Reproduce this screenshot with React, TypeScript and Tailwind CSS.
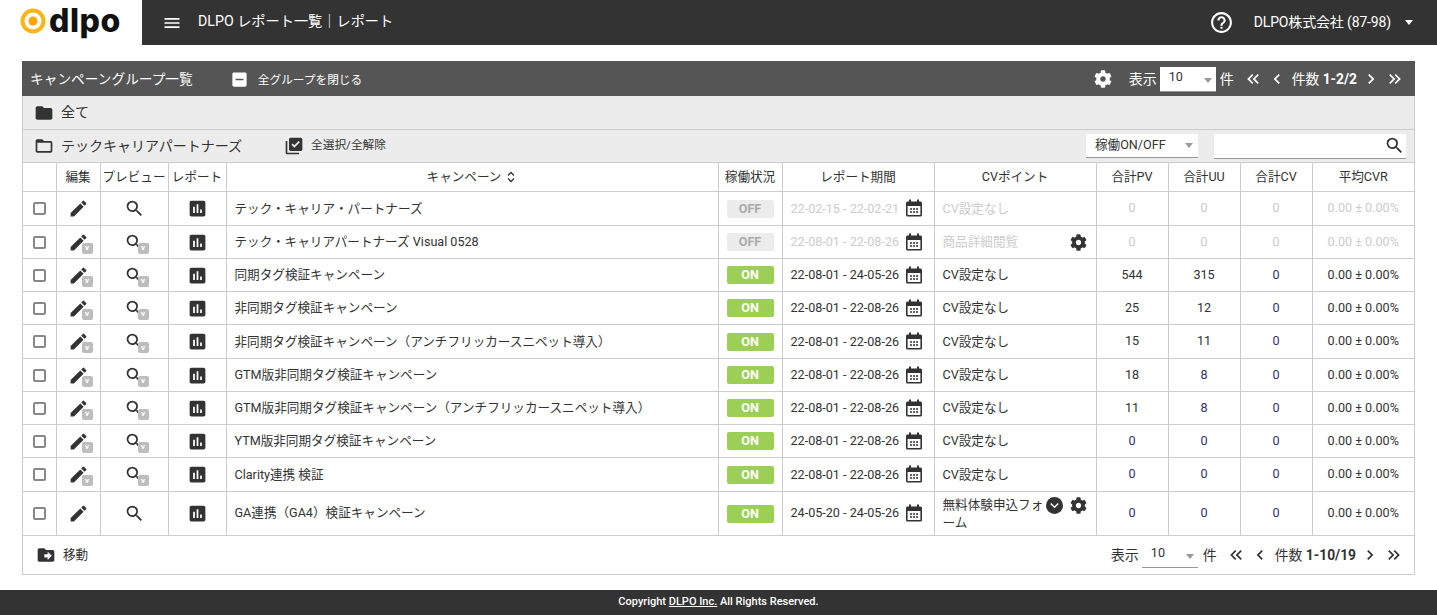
import { FaCog } from "react-icons/fa";
import {
  MdAssessment,
  MdChevronLeft,
  MdChevronRight,
  MdDriveFileMove,
  MdEdit,
  MdExpandMore,
  MdFolder,
  MdFolderOpen,
  MdHelpOutline,
  MdIndeterminateCheckBox,
  MdKeyboardDoubleArrowLeft,
  MdKeyboardDoubleArrowRight,
  MdLibraryAddCheck,
  MdMenu,
  MdSearch,
} from "react-icons/md";

const FONT = "font-['Roboto','Noto_Sans_CJK_JP',sans-serif]";

type Row = {
  name: string;
  on: boolean;
  period: string;
  cv: string;
  pv: string;
  uu: string;
  badge?: boolean;
  cvGear?: boolean;
  cvMore?: boolean;
  height: string;
  pvLink?: boolean;
  uuLink?: boolean;
};

const rows: Row[] = [
  { name: "テック・キャリア・パートナーズ", on: false, period: "22-02-15 - 22-02-21", cv: "CV設定なし", pv: "0", uu: "0", height: "h-[34px]" },
  { name: "テック・キャリアパートナーズ Visual 0528", on: false, period: "22-08-01 - 22-08-26", cv: "商品詳細閲覧", pv: "0", uu: "0", badge: true, cvGear: true, height: "h-[33px]" },
  { name: "同期タグ検証キャンペーン", on: true, period: "22-08-01 - 24-05-26", cv: "CV設定なし", pv: "544", uu: "315", badge: true, height: "h-[33px]" },
  { name: "非同期タグ検証キャンペーン", on: true, period: "22-08-01 - 22-08-26", cv: "CV設定なし", pv: "25", uu: "12", badge: true, height: "h-[33px]" },
  { name: "非同期タグ検証キャンペーン（アンチフリッカースニペット導入）", on: true, period: "22-08-01 - 22-08-26", cv: "CV設定なし", pv: "15", uu: "11", badge: true, height: "h-[34px]" },
  { name: "GTM版非同期タグ検証キャンペーン", on: true, period: "22-08-01 - 22-08-26", cv: "CV設定なし", pv: "18", uu: "8", uuLink: true, badge: true, height: "h-[33px]" },
  { name: "GTM版非同期タグ検証キャンペーン（アンチフリッカースニペット導入）", on: true, period: "22-08-01 - 22-08-26", cv: "CV設定なし", pv: "11", uu: "8", uuLink: true, badge: true, height: "h-[33px]" },
  { name: "YTM版非同期タグ検証キャンペーン", on: true, period: "22-08-01 - 22-08-26", cv: "CV設定なし", pv: "0", uu: "0", pvLink: true, uuLink: true, badge: true, height: "h-[33px]" },
  { name: "Clarity連携 検証", on: true, period: "22-08-01 - 22-08-26", cv: "CV設定なし", pv: "0", uu: "0", pvLink: true, uuLink: true, badge: true, height: "h-[34px]" },
  { name: "GA連携（GA4）検証キャンペーン", on: true, period: "24-05-20 - 24-05-26", cv: "無料体験申込フォーム", pv: "0", uu: "0", pvLink: true, uuLink: true, cvGear: true, cvMore: true, height: "h-[44px]" },
];

const headers = ["", "編集", "プレビュー", "レポート", "キャンペーン", "稼働状況", "レポート期間", "CVポイント", "合計PV", "合計UU", "合計CV", "平均CVR"];

const Calendar = () => (
  <svg viewBox="0 0 16 18" className="h-[18px] w-4 shrink-0">
    <path d="M1.5 2.5h13a1.5 1.5 0 0 1 1.5 1.5v12a1.5 1.5 0 0 1-1.5 1.5h-13A1.5 1.5 0 0 1 0 16V4a1.5 1.5 0 0 1 1.5-1.5z" fill="#333" />
    <rect x="3" y="0.5" width="2" height="3.5" fill="#333" />
    <rect x="11" y="0.5" width="2" height="3.5" fill="#333" />
    <rect x="1.6" y="7" width="12.8" height="9" fill="#fff" />
    <path d="M4 9.2h2v1.6H4zM7 9.2h2v1.6H7zM10 9.2h2v1.6h-2zM4 12.2h2v1.6H4zM7 12.2h2v1.6H7zM10 12.2h2v1.6h-2z" fill="#333" />
  </svg>
);

const Badged = ({ children, show }: { children: React.ReactNode; show?: boolean }) => (
  <span className="relative inline-flex h-[21px] w-[21px] align-middle">
    {children}
    {show && (
      <span className="absolute right-[-4px] bottom-[-1px] flex h-[11px] w-[11px] items-center justify-center rounded-[2px] bg-[#bdbdbd] text-[8px] leading-none font-bold text-white">
        v
      </span>
    )}
  </span>
);

const Pager = ({ count, light }: { count: string; light?: boolean }) => (
  <div className={`flex items-center text-[13.8px] ${light ? "text-white" : "text-[#333]"}`}>
    <MdKeyboardDoubleArrowLeft className="mr-[2px] text-[20px]" />
    <MdChevronLeft className="mx-[2px] text-[20px]" />
    <span className="mx-[3px]">
      件数 <b>{count}</b>
    </span>
    <MdChevronRight className="mr-[2px] ml-[1px] text-[20px]" />
    <MdKeyboardDoubleArrowRight className="ml-[2px] text-[20px]" />
  </div>
);

export default function App() {
  return (
    <div className={`flex h-[615px] w-[1437px] flex-col overflow-hidden bg-white ${FONT} text-[#333]`}>
      {/* header */}
      <header className="flex h-[45px] shrink-0 items-center bg-[#333] text-white">
        <div className="flex h-full w-[142px] shrink-0 items-center bg-white pb-[4px] pl-5">
          <svg viewBox="0 0 26 26" className="h-[26px] w-[26px]">
            <circle cx="13" cy="13" r="10.5" fill="none" stroke="#fdb515" strokeWidth="4" />
            <circle cx="13" cy="13" r="4.5" fill="#f9a400" />
          </svg>
          <span className="ml-[3px] font-['Inter',sans-serif] text-[32px] leading-none font-extrabold tracking-[0.5px] text-[#111]">
            dlpo
          </span>
        </div>
        <MdMenu className="ml-[20px] text-[20px]" />
        <span className="ml-[16px] pb-[2px] text-[14.2px]">DLPO レポート一覧｜レポート</span>
        <MdHelpOutline className="ml-auto text-[25px]" />
        <span className="ml-[20px] text-[14px] tracking-[-0.15px]">DLPO株式会社 (87-98)</span>
        <span className="mr-[24px] ml-[14px] h-0 w-0 border-x-[4.5px] border-t-[5px] border-x-transparent border-t-white" />
      </header>

      <main className="mx-[22px] mt-4 flex w-[1393px] flex-col">
        {/* panel title */}
        <div className="flex h-[35px] items-center bg-[#555] pt-px pl-2 text-white">
          <span className="text-[13.7px]">キャンペーングループ一覧</span>
          <MdIndeterminateCheckBox className="ml-[37px] text-[19px]" />
          <span className="ml-[9px] pt-[3px] text-[11.7px]">全グループを閉じる</span>
          <FaCog className="ml-auto text-[18px]" />
          <span className="ml-[17px] text-[14px]">表示</span>
          <div className="mr-1 ml-[3px] flex h-[25px] w-[56px] items-center justify-between border-b border-[#999] bg-white pr-1 pl-[9px] text-[12.6px] text-[#333]">
            <span className="pb-[3px]">10</span>
            <span className="mt-[3px] h-0 w-0 border-x-[4.5px] border-t-[5px] border-x-transparent border-t-[#999]" />
          </div>
          <span className="mr-[9px] text-[14px]">件</span>
          <Pager count="1-2/2" light />
          <span className="w-[10px]" />
        </div>

        <div className="border-x border-[#ccc]">
          {/* group rows */}
          <div className="flex h-[34px] items-center border-b border-[#ccc] bg-[#ececec] pl-[11px] text-[14px]">
            <MdFolder className="text-[20px]" />
            <span className="ml-[7px]">全て</span>
          </div>
          <div className="flex h-[32px] items-center bg-[#ececec] pl-[11px]">
            <MdFolderOpen className="text-[20px]" />
            <span className="ml-[7px] text-[14px]">テックキャリアパートナーズ</span>
            <MdLibraryAddCheck className="ml-[42px] text-[20px]" />
            <span className="ml-[7px] text-[11.7px]">全選択/全解除</span>
            <div className="ml-auto flex h-6 w-[112px] items-center justify-between border-b border-[#999] bg-white pr-[5px] pl-[9px] text-[12.6px]">
              稼働ON/OFF
              <span className="h-0 w-0 border-x-[4.5px] border-t-[5px] border-x-transparent border-t-[#999]" />
            </div>
            <div className="mr-2 ml-4 flex h-[25px] w-[192px] items-center justify-end border-b border-[#999] bg-white pr-[1px]">
              <MdSearch className="text-[21px]" />
            </div>
          </div>

          {/* campaigns */}
          <table className="w-full table-fixed border-collapse border-y border-[#ccc] text-[12.6px]">
            <colgroup>
              <col className="w-[33px]" />
              <col className="w-[44px]" />
              <col className="w-[68px]" />
              <col className="w-[58px]" />
              <col className="w-[492px]" />
              <col className="w-[64px]" />
              <col className="w-[152px]" />
              <col className="w-[162px]" />
              <col className="w-[72px]" />
              <col className="w-[72px]" />
              <col className="w-[72px]" />
              <col className="w-[102px]" />
            </colgroup>
            <thead>
              <tr className="h-[29px]">
                {headers.map((h, i) => (
                  <th key={i} className="border border-[#ccc] p-0 text-center font-normal whitespace-nowrap first:border-l-0 last:border-r-0">
                    {h}
                    {h === "キャンペーン" && (
                      <svg viewBox="0 0 8 12" className="mr-[2px] ml-[6px] inline-block h-3 w-2 align-[-2px]">
                        <path d="M1 4.5 4 1.5l3 3M1 7.5l3 3 3-3" fill="none" stroke="#333" strokeWidth="1.3" />
                      </svg>
                    )}
                  </th>
                ))}
              </tr>
            </thead>
            <tbody>
              {rows.map((r) => {
                const dim = r.on ? "" : "text-[#ccc]";
                const nudge = r.height === "h-[34px]" ? "pt-[2px]" : "";
                const linkOr = (link?: boolean) => (r.on ? (link ? "text-[#35306f]" : "") : "text-[#ccc]");
                return (
                  <tr key={r.name} className={r.height}>
                    <td className="border border-[#ccc] border-l-0 p-0 text-center">
                      <span className="mx-auto block h-[13px] w-[13px] rounded-[2px] border-2 border-[#888] bg-white" />
                    </td>
                    <td className="border border-[#ccc] p-0 text-center">
                      <Badged show={r.badge}>
                        <MdEdit className="text-[21px]" />
                      </Badged>
                    </td>
                    <td className="border border-[#ccc] p-0 text-center">
                      <Badged show={r.badge}>
                        <MdSearch className="text-[21px]" />
                      </Badged>
                    </td>
                    <td className="border border-[#ccc] p-0 text-center">
                      <MdAssessment className="inline-block align-middle text-[21px]" />
                    </td>
                    <td className={`border border-[#ccc] px-2 py-0 ${nudge}`}>{r.name}</td>
                    <td className="border border-[#ccc] p-0 text-center">
                      <span className={`inline-block h-[18px] w-[47px] rounded-[2px] align-middle text-[12.6px] leading-[18px] font-bold ${r.on ? "bg-[#9ccf56] text-white" : "bg-[#ececec] text-[#aaa]"}`}>
                        {r.on ? "ON" : "OFF"}
                      </span>
                    </td>
                    <td className="border border-[#ccc] py-0 pr-3 pl-2">
                      <div className="flex items-center justify-between">
                        <span className={`${dim} ${nudge}`}>{r.period}</span>
                        <Calendar />
                      </div>
                    </td>
                    <td className="border border-[#ccc] py-0 pr-[9px] pl-2">
                      <div className={`flex ${r.cvMore ? "items-start" : "items-center"}`}>
                        <span className={`min-w-0 flex-1 leading-[18px] ${dim}`}>{r.cv}</span>
                        {r.cvMore && <MdExpandMore className="mt-px ml-[2px] h-[17px] w-[17px] shrink-0 rounded-full bg-[#333] text-white" />}
                        {r.cvGear && <FaCog className={`shrink-0 text-[17px] ${r.cvMore ? "mt-px ml-[7px]" : ""}`} />}
                      </div>
                    </td>
                    <td className={`border border-[#ccc] p-0 text-center ${linkOr(r.pvLink)}`}>{r.pv}</td>
                    <td className={`border border-[#ccc] p-0 text-center ${linkOr(r.uuLink)}`}>{r.uu}</td>
                    <td className={`border border-[#ccc] p-0 text-center ${linkOr(true)}`}>0</td>
                    <td className={`border border-[#ccc] border-r-0 p-0 text-center ${dim}`}>0.00 ± 0.00%</td>
                  </tr>
                );
              })}
            </tbody>
          </table>

          {/* table footer */}
          <div className="flex h-[38px] items-center pr-[10px] pl-[13px]">
            <MdDriveFileMove className="text-[20px]" />
            <span className="ml-[7px] text-[12.6px]">移動</span>
            <span className="ml-auto text-[14px]">表示</span>
            <div className="mr-[5px] ml-[3px] flex h-[25px] w-[56px] items-center justify-between border-b border-[#999] pr-1 pl-[9px] text-[12.6px]">
              <span className="pb-[3px]">10</span>
              <span className="mt-[3px] h-0 w-0 border-x-[4.5px] border-t-[5px] border-x-transparent border-t-[#999]" />
            </div>
            <span className="mr-[9px] text-[14px]">件</span>
            <Pager count="1-10/19" />
          </div>
        </div>
        <div className="border-t border-[#ccc]" />
      </main>

      <footer className="mt-auto flex h-[25px] shrink-0 items-center justify-center bg-[#333] text-[11px] font-medium text-white">
        <span>
          Copyright <u>DLPO Inc.</u> All Rights Reserved.
        </span>
      </footer>
    </div>
  );
}
